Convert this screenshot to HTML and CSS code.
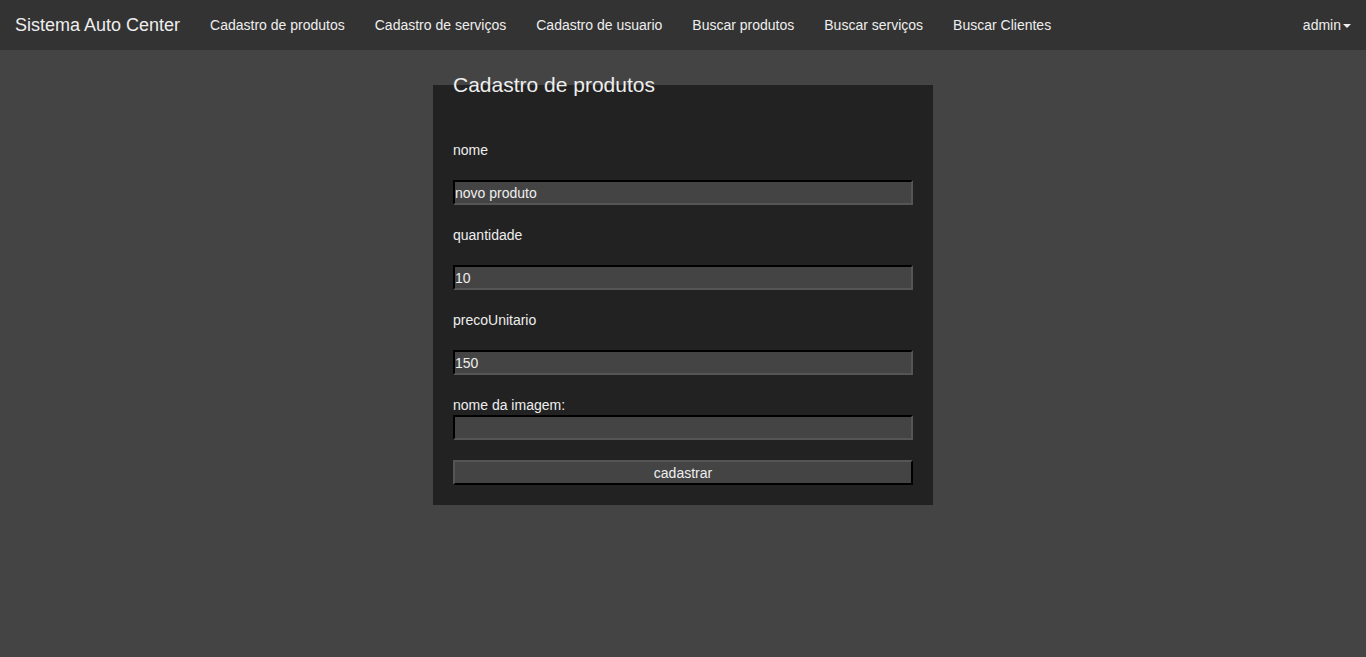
FILE: index.html
```html
<!DOCTYPE html>
<html lang="pt-BR">
<head>
<meta charset="utf-8">
<meta name="viewport" content="width=device-width, initial-scale=1">
<title>Sistema Auto Center</title>
<link rel="stylesheet" href="styles.css">
</head>
<body>
<nav class="navbar">
  <a class="brand" href="#">Sistema Auto Center</a>
  <ul class="nav">
    <li><a href="#">Cadastro de produtos</a></li>
    <li><a href="#">Cadastro de serviços</a></li>
    <li><a href="#">Cadastro de usuario</a></li>
    <li><a href="#">Buscar produtos</a></li>
    <li><a href="#">Buscar serviços</a></li>
    <li><a href="#">Buscar Clientes</a></li>
  </ul>
  <ul class="nav nav-right">
    <li><a href="#">admin<span class="caret"></span></a></li>
  </ul>
</nav>
<main>
  <form class="form">
    <h1 class="title">Cadastro de produtos</h1>
    <label class="label" for="nome">nome</label>
    <input class="field" id="nome" type="text" value="novo produto">
    <label class="label" for="quantidade">quantidade</label>
    <input class="field" id="quantidade" type="text" value="10">
    <label class="label" for="preco">precoUnitario</label>
    <input class="field" id="preco" type="text" value="150">
    <label class="label label-tight" for="imagem">nome da imagem:</label>
    <input class="field" id="imagem" type="text">
    <button class="field submit" type="button">cadastrar</button>
  </form>
</main>
</body>
</html>
```
FILE: styles.css
```css
* {
  box-sizing: border-box;
}

body {
  margin: 0;
  background: #444;
  color: #eee;
  font: 14px/20px "Liberation Sans", Arial, sans-serif;
}

a {
  color: #eee;
  text-decoration: none;
}

.navbar {
  display: flex;
  min-height: 50px;
  background: #333;
}

.brand {
  padding: 15px;
  font-size: 18px;
}

.nav {
  display: flex;
  margin: 0;
  padding: 0;
  list-style: none;
}

.nav a {
  display: block;
  padding: 15px;
}

.nav-right {
  margin-left: auto;
}

.caret {
  display: inline-block;
  margin-left: 2px;
  vertical-align: middle;
  border-top: 4px solid #eee;
  border-right: 4px solid transparent;
  border-left: 4px solid transparent;
}

.form {
  display: flex;
  flex-direction: column;
  max-width: 500px;
  margin: 35px auto 0;
  padding: 0 20px 20px;
  background: #222;
}

.title {
  margin: -15px 0 40px;
  font-size: 21px;
  font-weight: 400;
  line-height: 30px;
}

.label {
  margin-bottom: 20px;
}

.label-tight {
  margin-bottom: 0;
}

.field {
  width: 100%;
  height: 25px;
  margin: 0 0 20px;
  padding: 0;
  border: 2px inset #555;
  border-radius: 0;
  background: #444;
  color: #eee;
  font: inherit;
}

.submit {
  margin: 0;
  border-style: outset;
}
```
